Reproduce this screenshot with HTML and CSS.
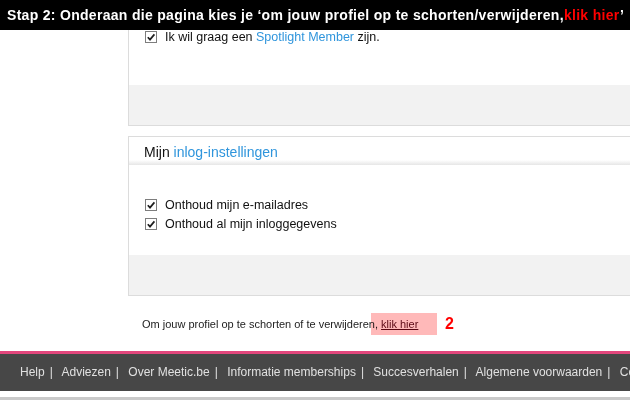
FILE: index.html
```html
<!DOCTYPE html>
<html lang="nl">
	<head>
		<meta charset="UTF-8" />
		<meta name="viewport" content="width=device-width, initial-scale=1.0" />
		<title>Mijn instellingen | Meetic.be</title>
		<link rel="stylesheet" href="styles.css">
	</head>
	<body>
		<div class="banner">Stap 2: Onderaan die pagina kies je ‘om jouw profiel op te schorten/verwijderen,<span class="hot">klik hier</span>’</div>

		<div class="content">
			<div class="panel panel-cut">
				<div class="panel-body first">
					<label class="check-row">
						<svg class="box" viewBox="0 0 12 12" width="12" height="12"><rect x="0.5" y="0.5" width="11" height="11" fill="#fff" stroke="#7d7d7d"/><path d="M2.8 6.2 L5 8.6 L9.4 3.4" fill="none" stroke="#1e1e1e" stroke-width="1.7"/></svg>
						<span>Ik wil graag een <a class="blue" href="#">Spotlight Member</a> zijn.</span>
					</label>
				</div>
				<div class="panel-foot"></div>
			</div>

			<div class="panel">
				<div class="panel-head">Mijn <span class="blue">inlog-instellingen</span></div>
				<div class="panel-body">
					<label class="check-row">
						<svg class="box" viewBox="0 0 12 12" width="12" height="12"><rect x="0.5" y="0.5" width="11" height="11" fill="#fff" stroke="#7d7d7d"/><path d="M2.8 6.2 L5 8.6 L9.4 3.4" fill="none" stroke="#1e1e1e" stroke-width="1.7"/></svg>
						<span>Onthoud mijn e-mailadres</span>
					</label>
					<label class="check-row">
						<svg class="box" viewBox="0 0 12 12" width="12" height="12"><rect x="0.5" y="0.5" width="11" height="11" fill="#fff" stroke="#7d7d7d"/><path d="M2.8 6.2 L5 8.6 L9.4 3.4" fill="none" stroke="#1e1e1e" stroke-width="1.7"/></svg>
						<span>Onthoud al mijn inloggegevens</span>
					</label>
				</div>
				<div class="panel-foot"></div>
			</div>

			<div class="note">
				<span class="mark"></span>
				Om jouw profiel op te schorten of te verwijderen, <a class="note-link" href="#">klik hier</a>
				<span class="step">2</span>
			</div>
		</div>

		<div class="footer">
			<div class="footer-links">
				<a href="#">Help</a><span class="sep">|</span>
				<a href="#">Adviezen</a><span class="sep">|</span>
				<a href="#">Over Meetic.be</a><span class="sep">|</span>
				<a href="#">Informatie memberships</a><span class="sep">|</span>
				<a href="#">Succesverhalen</a><span class="sep">|</span>
				<a href="#">Algemene voorwaarden</a><span class="sep">|</span>
				<a href="#">Contact</a>
			</div>
		</div>
	</body>
</html>
```

FILE: styles.css
```css
body {
	font-family: "Liberation Sans", Arial, sans-serif;
	background-color: #fff;
	margin: 0;
	padding: 0;
	width: 630px;
	height: 400px;
	overflow: hidden;
	position: relative;
	color: #1a1a1a;
}

a {
	text-decoration: none;
	color: inherit;
}

.banner {
	position: absolute;
	top: 0;
	left: 0;
	right: 0;
	height: 30px;
	line-height: 31px;
	padding-left: 7px;
	background-color: #000;
	color: #fff;
	font-weight: bold;
	font-size: 14px;
	letter-spacing: 0.3px;
	white-space: nowrap;
	overflow: hidden;
	z-index: 10;
}

.banner .hot {
	color: #ff0000;
}

.content {
	padding-left: 128px;
}

.panel {
	width: 600px;
	border: 1px solid #dcdcdc;
	border-right: none;
	margin-bottom: 10px;
}

.panel-cut {
	border-top: none;
}

.panel-head {
	height: 28px;
	line-height: 30px;
	padding-left: 15px;
	font-size: 14px;
	color: #111;
	background: linear-gradient(to bottom, #fff 0, #fff 82%, #e6e6e6 100%);
}

.panel-body {
	padding: 30px 0 22px 16px;
	background-color: #fff;
}

.panel-body.first {
	padding: 27px 0 39px 16px;
}

.panel-foot {
	height: 40px;
	background-color: #f2f2f2;
}

.check-row {
	display: flex;
	align-items: center;
	gap: 8px;
	height: 19px;
	font-size: 12.5px;
	color: #111;
}

.box {
	display: block;
	flex-shrink: 0;
}

.blue {
	color: #2f95dc;
}

.note {
	position: relative;
	margin-top: 17px;
	height: 22px;
	line-height: 22px;
	padding-left: 14px;
	font-size: 11px;
	color: #222;
	white-space: nowrap;
}

.note .mark {
	position: absolute;
	left: 243px;
	top: 0;
	width: 66px;
	height: 22px;
	background-color: #ffb9b9;
	mix-blend-mode: multiply;
}

.note-link {
	color: #5a0a1a;
	text-decoration: underline;
}

.note .step {
	position: absolute;
	left: 317px;
	top: 0;
	color: #ff0000;
	font-weight: bold;
	font-size: 16px;
}

.footer {
	position: absolute;
	top: 351px;
	left: 0;
	right: 0;
	border-top: 3px solid #e2467c;
	border-bottom: 3px solid #c9c9c9;
}

.footer-links {
	height: 37px;
	line-height: 37px;
	margin-bottom: 6px;
	padding-left: 20px;
	background-color: #474747;
	color: #e0e0e0;
	font-size: 12px;
	white-space: nowrap;
	overflow: hidden;
}

.sep {
	margin: 0 6px 0 5px;
}
```
